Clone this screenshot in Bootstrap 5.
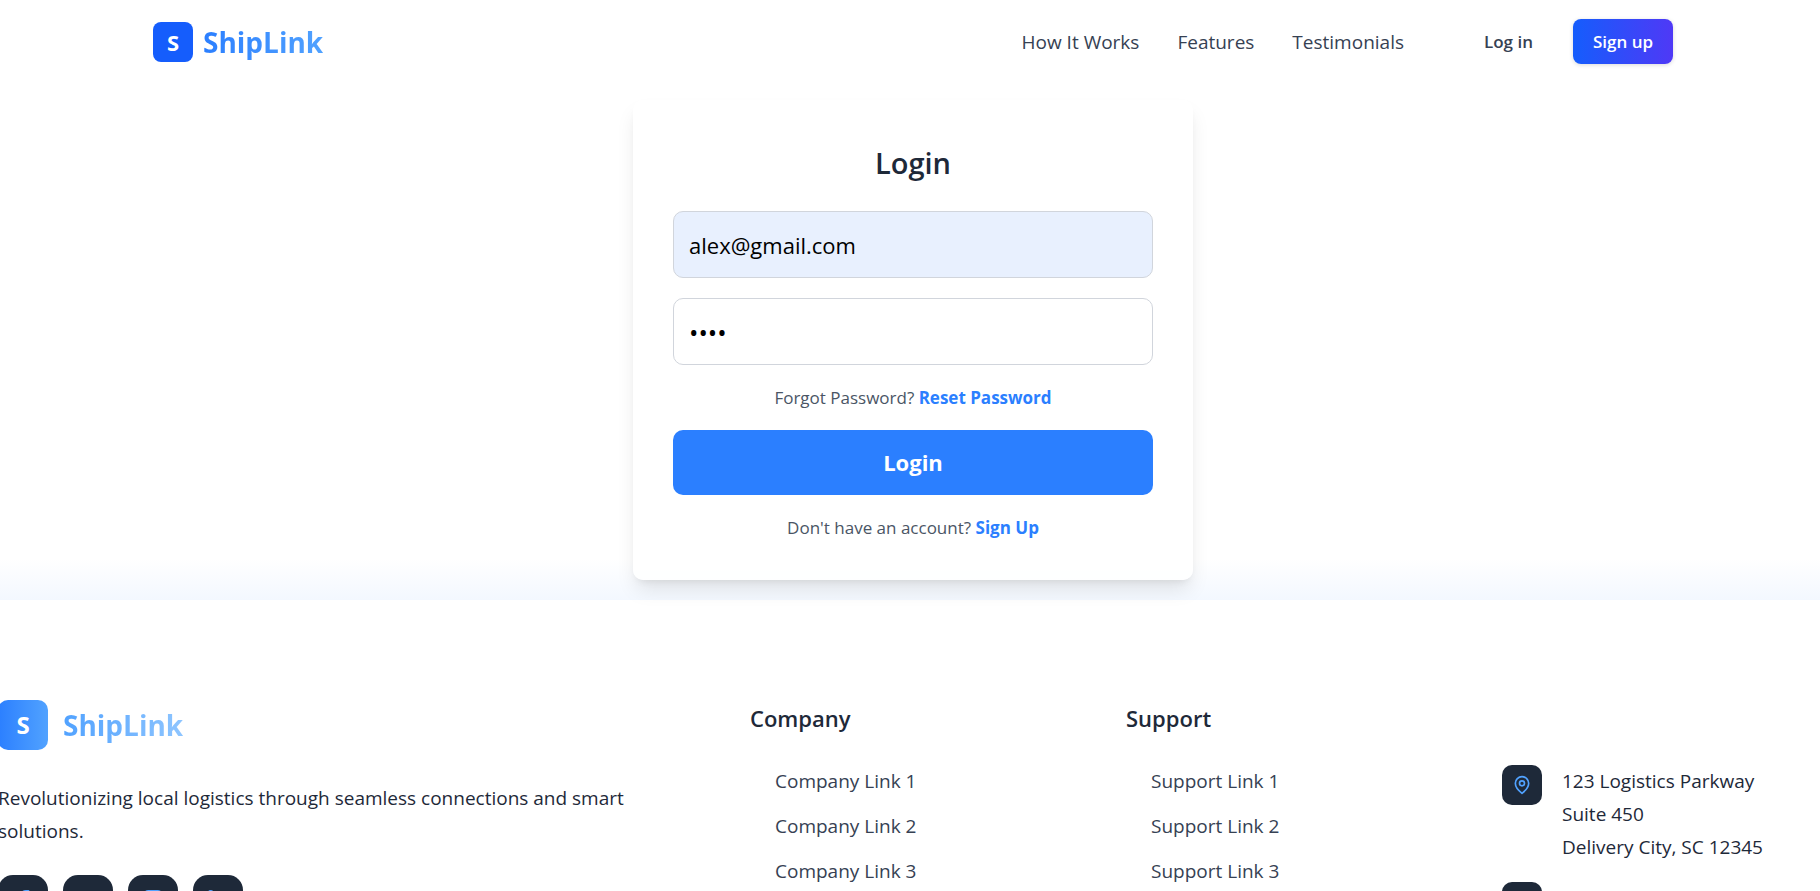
<!DOCTYPE html>
<html lang="en">
<head>
<meta charset="utf-8">
<meta name="viewport" content="width=device-width, initial-scale=1">
<title>ShipLink – Login</title>
<link href="https://cdn.jsdelivr.net/npm/bootstrap@5.3.0/dist/css/bootstrap.min.css" rel="stylesheet">
<style>
  :root { --ink: #1e2939; --slate: #364153; --muted: #4a5565; --blue: #2b7fff; --sky: #51a2ff; }
  body { font-family: "Open Sans", "Noto Sans", sans-serif; font-size: 19px; line-height: 30px; color: var(--ink); background: #fff; }
  a { text-decoration: none; }
  .bleed { margin-right: -6px; }
  .site-bar { max-width: 1600px; padding: 19px 40px; }
  .site-bar .nav-link { color: var(--slate); }
  .site-bar .nav-gap { gap: 38px; }
  .site-bar .auth { gap: 40px; margin-left: 80px; font-size: 17px; font-weight: 600; }
  .brand-link { gap: 10px; }
  .brand-box { width: 40px; height: 40px; border-radius: 8px; background: #155dfc; font-size: 22px; font-weight: 700; }
  .brand-name { font-size: 28px; line-height: 40px; font-weight: 700; color: transparent; background: linear-gradient(90deg, #2b7fff, #51a2ff); -webkit-background-clip: text; background-clip: text; }
  .btn-signup { width: 100px; height: 45px; padding: 0; border: 0; border-radius: 8px; font-size: 17px; font-weight: 600; color: #fff; background: linear-gradient(90deg, #155dfc, #4f39f6); box-shadow: 0 1px 4px rgba(0,0,0,.15); }
  .login-area { padding: 17px 16px 20px; background: linear-gradient(#fff 92%, #f3f8ff); }
  .login-card { max-width: 560px; padding: 40px; border: 0; border-radius: 10px; background: rgba(255,255,255,.8); box-shadow: 0 12px 20px -3px rgba(0,0,0,.1), 0 5px 8px -5px rgba(0,0,0,.1); }
  .login-card h1 { font-size: 29px; line-height: 46px; font-weight: 600; margin-bottom: 25px; }
  .login-card .form-control { height: 67px; padding: 0 15px; border: 1px solid #d1d5dc; border-radius: 10px; font-size: 22px; color: #000; margin-bottom: 20px; }
  .login-card .field-filled { background: #e8f0fe; }
  .login-card .field-secret { font-size: 25px; }
  .login-card p { font-size: 17px; line-height: 25px; color: var(--muted); }
  .login-card p a { color: var(--blue); font-weight: 700; }
  .btn-login { height: 65px; border: 0; border-radius: 10px; background: var(--blue); color: #fff; font-size: 22px; font-weight: 700; }
  .site-foot { padding: 100px 0 40px; }
  .foot-grid { display: grid; grid-template-columns: repeat(5, 1fr); gap: 48px; margin: 0 -10px 0 -2px; }
  .foot-about { grid-column: span 2; }
  .foot-brand { gap: 15px; }
  .foot-box { width: 50px; height: 50px; border-radius: 10px; background: linear-gradient(90deg, #2b7fff, #51a2ff); font-size: 24px; font-weight: 700; }
  .foot-name { background-image: linear-gradient(90deg, #51a2ff, #8ec5ff); }
  .foot-copy { line-height: 33px; margin: 32px 0 27px; }
  .social-row { gap: 15px; }
  .social { width: 50px; height: 50px; border-radius: 15px; background: var(--ink); color: var(--sky); }
  .foot-grid h2 { font-size: 22px; line-height: 36px; font-weight: 600; margin-bottom: 30px; }
  .foot-links { gap: 15px; padding-left: 25px; }
  .foot-links a { color: var(--slate); }
  .foot-contact { padding-top: 65px; gap: 18px; }
  .contact-line { gap: 20px; }
  .pin-box { width: 40px; height: 40px; border-radius: 10px; background: var(--ink); color: var(--sky); }
  .foot-contact address { line-height: 33px; }
  .line-icon { fill: none; stroke: currentColor; stroke-width: 2; stroke-linecap: round; stroke-linejoin: round; }
</style>
</head>
<body class="vh-100 overflow-hidden">
<header class="bleed">
  <nav class="site-bar d-flex align-items-center mx-auto" aria-label="Main">
    <a href="#" class="brand-link d-flex align-items-center">
      <span class="brand-box d-flex align-items-center justify-content-center text-white">S</span>
      <span class="brand-name">ShipLink</span>
    </a>
    <div class="nav-gap d-flex ms-auto">
      <a class="nav-link" href="#">How It Works</a>
      <a class="nav-link" href="#">Features</a>
      <a class="nav-link" href="#">Testimonials</a>
    </div>
    <div class="auth d-flex align-items-center">
      <a class="nav-link" href="#">Log in</a>
      <button type="button" class="btn btn-signup">Sign up</button>
    </div>
  </nav>
</header>

<main class="login-area bleed">
  <form class="login-card card mx-auto text-center">
    <h1>Login</h1>
    <input class="form-control field-filled" type="email" aria-label="Email" value="alex@gmail.com">
    <input class="form-control field-secret" type="password" aria-label="Password" value="ship">
    <p class="mb-3 pb-1">Forgot Password? <a href="#">Reset Password</a></p>
    <button type="button" class="btn btn-login w-100">Login</button>
    <p class="mt-3 mb-0 pt-1">Don't have an account? <a href="#">Sign Up</a></p>
  </form>
</main>

<footer class="site-foot">
  <div class="foot-grid">
    <section class="foot-about">
      <a href="#" class="foot-brand d-flex align-items-center">
        <span class="foot-box d-flex align-items-center justify-content-center text-white">S</span>
        <span class="brand-name foot-name">ShipLink</span>
      </a>
      <p class="foot-copy">Revolutionizing local logistics through seamless connections and smart solutions.</p>
      <div class="social-row d-flex">
        <a href="#" class="social d-flex align-items-center justify-content-center" aria-label="Facebook">
          <svg class="line-icon" width="22" height="22" viewBox="0 0 24 24"><path d="M18 2h-3a5 5 0 0 0-5 5v3H7v4h3v8h4v-8h3l1-4h-4V7a1 1 0 0 1 1-1h3z"/></svg>
        </a>
        <a href="#" class="social d-flex align-items-center justify-content-center" aria-label="Twitter">
          <svg class="line-icon" width="22" height="22" viewBox="0 0 24 24"><path d="M22 4s-.7 2.100-2 3.400c1.600 10-9.400 17.300-18 11.600 2.200.1 4.400-.6 6-2C3 15.500.5 9.600 3 5c2.200 2.600 5.600 4.100 9 4-.9-4.200 4-6.600 7-3.800 1.100 0 3-1.200 3-1.200z"/></svg>
        </a>
        <a href="#" class="social d-flex align-items-center justify-content-center" aria-label="Instagram">
          <svg class="line-icon" width="22" height="22" viewBox="0 0 24 24"><rect x="2" y="2" width="20" height="20" rx="5"/><circle cx="12" cy="12" r="4"/><path d="M17.500 6.500h.01"/></svg>
        </a>
        <a href="#" class="social d-flex align-items-center justify-content-center" aria-label="LinkedIn">
          <svg class="line-icon" width="22" height="22" viewBox="0 0 24 24"><path d="M16 8a6 6 0 0 1 6 6v7h-4v-7a2 2 0 0 0-4 0v7h-4v-7a6 6 0 0 1 6-6z"/><rect x="2" y="9" width="4" height="12"/><circle cx="4" cy="4" r="2"/></svg>
        </a>
      </div>
    </section>
    <section>
      <h2>Company</h2>
      <div class="foot-links d-flex flex-column align-items-start">
        <a href="#">Company Link 1</a>
        <a href="#">Company Link 2</a>
        <a href="#">Company Link 3</a>
      </div>
    </section>
    <section>
      <h2>Support</h2>
      <div class="foot-links d-flex flex-column align-items-start">
        <a href="#">Support Link 1</a>
        <a href="#">Support Link 2</a>
        <a href="#">Support Link 3</a>
      </div>
    </section>
    <section class="foot-contact d-flex flex-column">
      <div class="contact-line d-flex">
        <span class="pin-box d-flex align-items-center justify-content-center flex-shrink-0">
          <svg class="line-icon" width="20" height="20" viewBox="0 0 24 24"><path d="M20 10c0 6-8 12-8 12s-8-6-8-12a8 8 0 0 1 16 0z"/><circle cx="12" cy="10" r="3"/></svg>
        </span>
        <address class="mb-0">123 Logistics Parkway<br>Suite 450<br>Delivery City, SC 12345</address>
      </div>
      <div class="contact-line d-flex">
        <span class="pin-box d-flex align-items-center justify-content-center flex-shrink-0">
          <svg class="line-icon" width="20" height="20" viewBox="0 0 24 24"><path d="M5 3h4l2 5-2.500 2a12 12 0 0 0 5.500 5.500L16 13l5 2v4a2 2 0 0 1-2 2A16 16 0 0 1 3 5a2 2 0 0 1 2-2z"/></svg>
        </span>
      </div>
    </section>
  </div>
</footer>
<script src="https://cdn.jsdelivr.net/npm/bootstrap@5.3.0/dist/js/bootstrap.bundle.min.js"></script>
</body>
</html>
